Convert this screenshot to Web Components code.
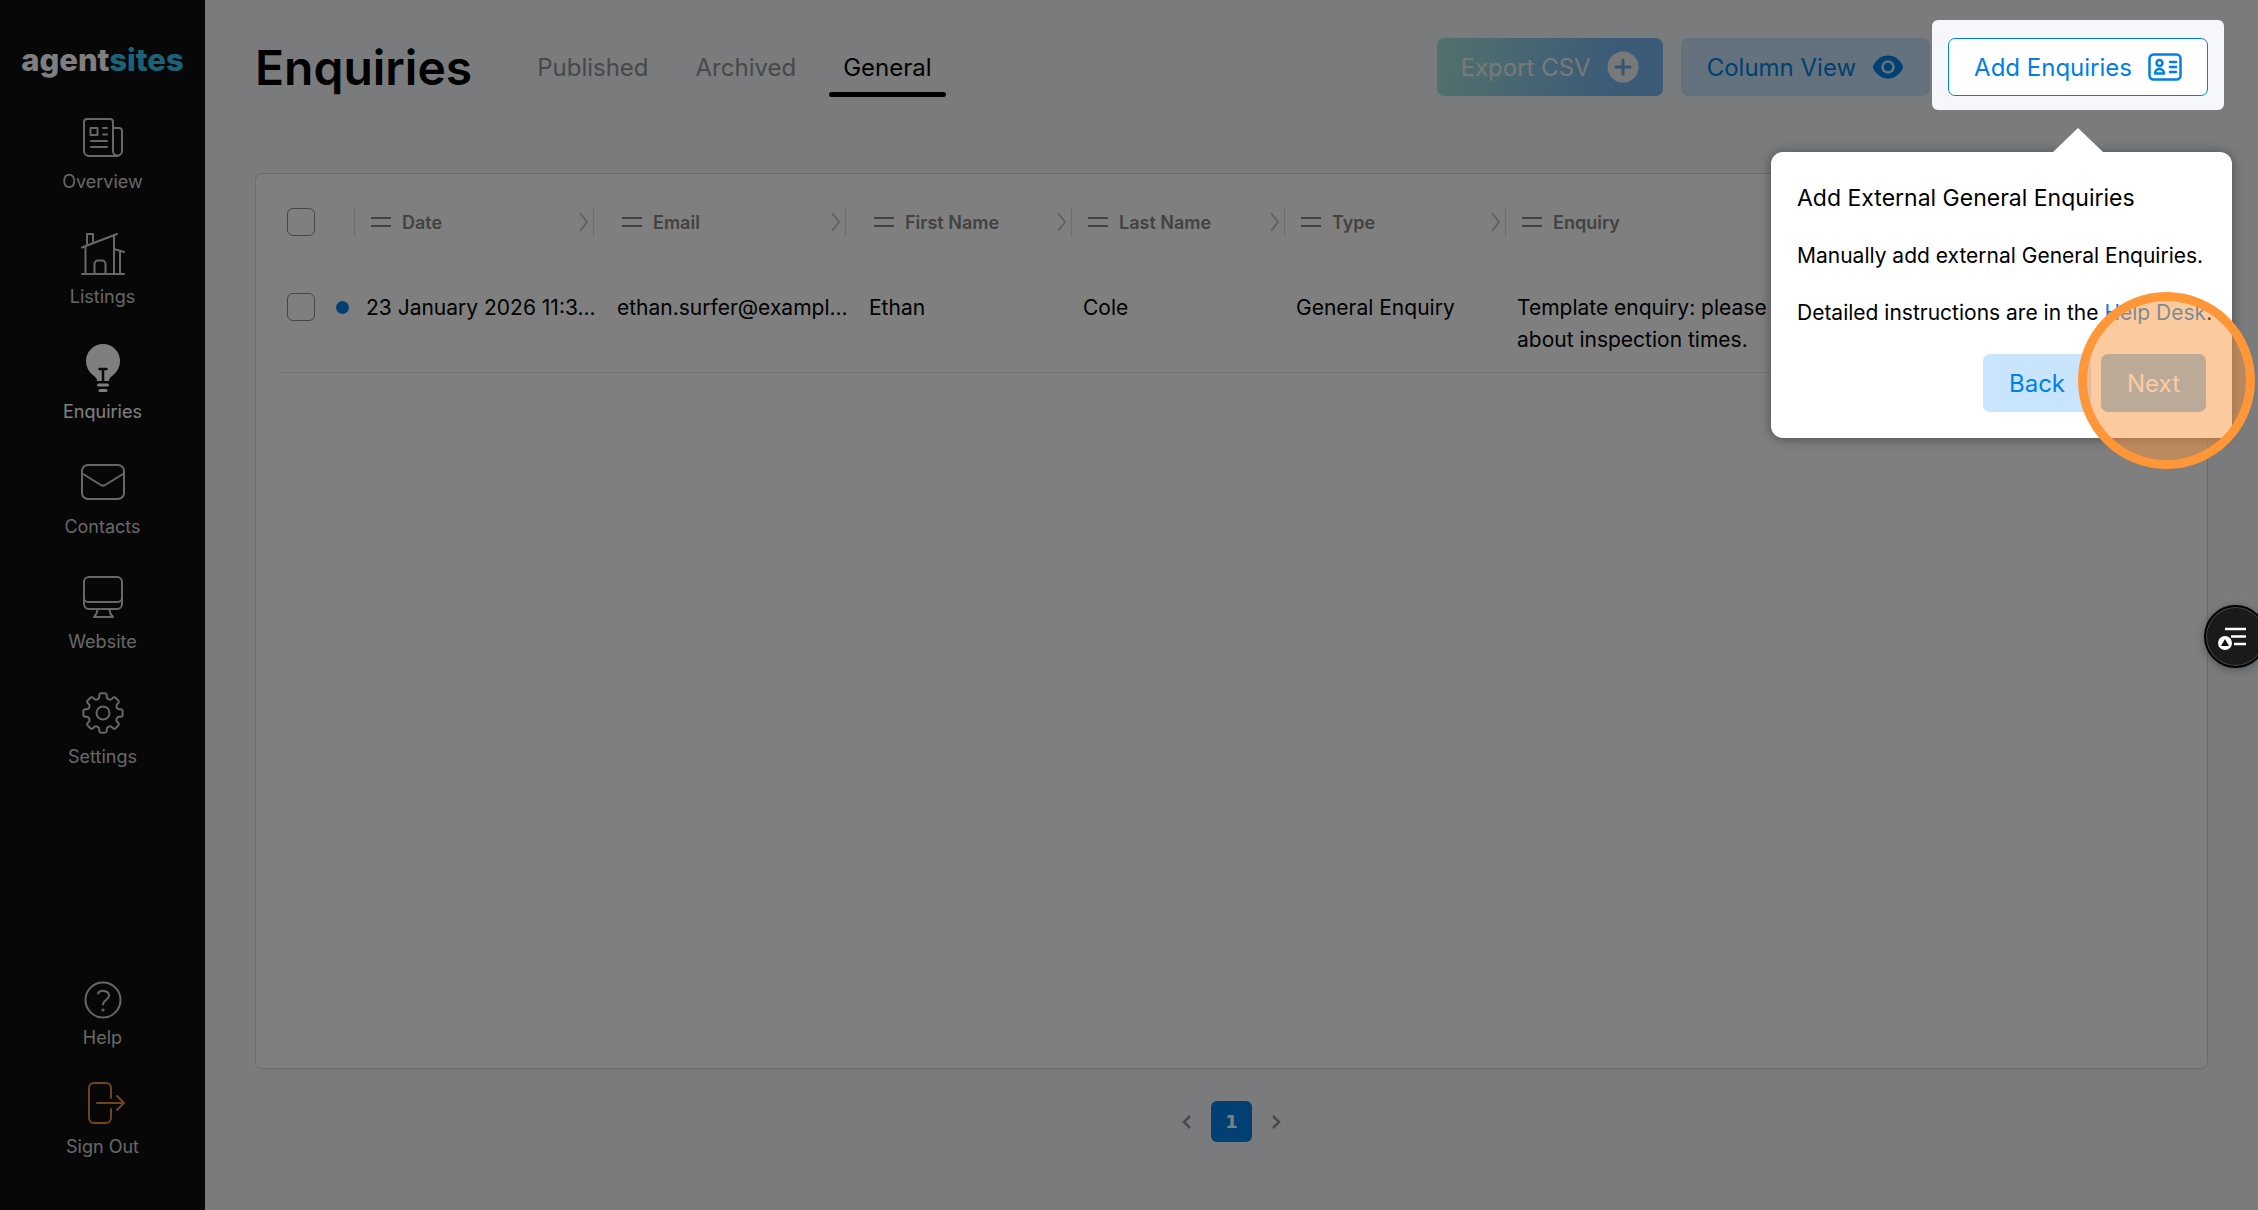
<!DOCTYPE html>
<html lang="en">
<head>
<meta charset="utf-8">
<title>Enquiries - agentsites</title>
<style>
  * {
    box-sizing: border-box;
  }
  body {
    display: flex;
    min-height: 100vh;
    margin: 0;
    overflow: hidden;
    background: #f5f7fa;
    color: #000;
    font-family: Inter, "Liberation Sans", sans-serif;
    font-size: 21px;
    --blue: #0080e6;
    --pale: #c9e5fd;
  }
  main {
    flex: 1;
    min-width: 0;
    display: flex;
    flex-direction: column;
    padding: 38px 50px 68px;
  }
</style>
</head>
<body>

<side-bar>
  <nav-item icon="overview">Overview</nav-item>
  <nav-item icon="listings">Listings</nav-item>
  <nav-item icon="bulb" active>Enquiries</nav-item>
  <nav-item icon="mail">Contacts</nav-item>
  <nav-item icon="screen">Website</nav-item>
  <nav-item icon="gear">Settings</nav-item>
  <nav-item slot="bottom" icon="help">Help</nav-item>
  <nav-item slot="bottom" icon="signout">Sign Out</nav-item>
</side-bar>

<main>
  <page-header heading="Enquiries">
    <tab-link slot="tabs">Published</tab-link>
    <tab-link slot="tabs">Archived</tab-link>
    <tab-link slot="tabs" active>General</tab-link>
    <action-button kind="gradient" icon="plus">Export CSV</action-button>
    <action-button kind="pale" icon="eye">Column View</action-button>
    <tour-step heading="Add External General Enquiries">
      <action-button slot="target" kind="outline" icon="card">Add Enquiries</action-button>
      Manually add external General Enquiries.
    </tour-step>
  </page-header>
  <enquiry-table></enquiry-table>
  <page-nav></page-nav>
</main>

<guide-toggle></guide-toggle>

<script>
  // outline of an eight tooth cog with softened corners
  function cog(c, outer, inner) {
    const pts = [];
    for (let i = 0; i < 8; i++) {
      [[-14, inner], [-11, outer], [11, outer], [14, inner]].forEach(([deg, r]) => {
        const a = (i * 45 + deg) * Math.PI / 180;
        pts.push([c + r * Math.sin(a), c - r * Math.cos(a)]);
      });
    }
    // point two units from p on the way to q
    const toward = (p, q) => {
      const k = 2 / Math.hypot(q[0] - p[0], q[1] - p[1]);
      return `${(p[0] + (q[0] - p[0]) * k).toFixed(2)} ${(p[1] + (q[1] - p[1]) * k).toFixed(2)}`;
    };
    const n = pts.length;
    return pts.map((p, i) =>
      `${i ? 'L' : 'M'}${toward(p, pts[(i + n - 1) % n])}Q${p[0].toFixed(2)} ${p[1].toFixed(2)} ${toward(p, pts[(i + 1) % n])}`
    ).join('') + 'Z';
  }

  const line = (w, h, body) => `<svg width="${w}" height="${h}" viewBox="0 0 ${w} ${h}" fill="none"
    stroke="currentColor" stroke-width="2" stroke-linecap="round" stroke-linejoin="round" aria-hidden="true">${body}</svg>`;

  const icons = {
    overview: line(48, 48, `
      <path d="M34 42H10a5 5 0 0 1-5-5V8a3 3 0 0 1 3-3h23a3 3 0 0 1 3 3v29a4.500 4.500 0 0 0 9 0V17a3 3 0 0 0-3-3h-6M34 42h5"/>
      <path d="M11.500 14h7v7h-7zM24 14h4M24 20.500h4M12 27h16M12 33h16"/>`),
    listings: line(48, 48, `
      <path d="M3 45h42M6.500 45V18M3 18.500 38 5M35 6v39M8 15V5h6v8M35 20l10 3M41 23v22"/>
      <path d="M15.500 45V35a3.500 3.500 0 0 1 3.500-3.500h4a3.500 3.500 0 0 1 3.500 3.500v10"/>`),
    bulb: `<svg width="48" height="50" viewBox="0 0 48 50" aria-hidden="true">
      <path fill="currentColor" d="M24 1a17 17 0 0 0-17 17c0 7 4 12 8 15 2 1.500 3 3 3 5h12c0-2 1-3.500 3-5 4-3 8-8 8-15A17 17 0 0 0 24 1z"/>
      <path stroke="#0f0f0f" stroke-width="2.500" stroke-linecap="round" fill="none" d="M20.500 26h7M24 26v12"/>
      <path stroke="currentColor" stroke-width="3" stroke-linecap="round" d="M19.500 42h9M21 47.500h6"/></svg>`,
    mail: line(48, 48, `<rect x="3" y="6" width="42" height="34" rx="6"/><path d="m4 15 17 10.500a5 5 0 0 0 6 0L44 15"/>`),
    screen: line(48, 48, `<rect x="5" y="3" width="38" height="32" rx="5"/>
      <path d="M5 24a4 4 0 0 0 4 4h30a4 4 0 0 0 4-4M18.500 35c0 4-1.500 6-3.500 8h19c-2-2-3.500-4-3.500-8"/>`),
    gear: line(48, 48, `<path d="${cog(24, 20, 15)}"/><circle cx="24" cy="24" r="6.500"/>`),
    help: line(40, 40, `<circle cx="20" cy="20" r="17.500"/>
      <path d="M15 13.500c2-4 11-3.500 11 2 0 4.500-6 4.500-6 9"/><circle cx="20" cy="30" r=".6"/>`),
    signout: line(48, 48, `<path d="M32 19V9a5 5 0 0 0-5-5H15a5 5 0 0 0-5 5v30a5 5 0 0 0 5 5h12a5 5 0 0 0 5-5V30M18 24h27M38 17l7 7-7 7"/>`),
    plus: `<svg width="32" height="32" viewBox="0 0 32 32" aria-hidden="true"><circle cx="16" cy="16" r="15.500" fill="currentColor"/>
      <path d="M16 9v14M9 16h14" stroke="#6fabe0" stroke-width="3" stroke-linecap="round"/></svg>`,
    eye: `<svg width="32" height="32" viewBox="0 0 32 32" aria-hidden="true">
      <path fill="currentColor" d="M16 4.500C9 4.500 3.500 9.500 1 15a2.500 2.500 0 0 0 0 2c2.500 5.500 8 10.500 15 10.500S28.500 22.500 31 17a2.500 2.500 0 0 0 0-2C28.500 9.500 23 4.500 16 4.500z"/>
      <circle cx="16" cy="16" r="5.500" fill="none" stroke="#c9e5fd" stroke-width="2.500"/></svg>`,
    card: `<svg width="34" height="28" viewBox="0 0 34 28" fill="none" stroke="currentColor" stroke-width="2.500" stroke-linecap="round" aria-hidden="true">
      <rect x="1.500" y="1.500" width="31" height="25" rx="4"/><circle cx="11.500" cy="10" r="3"/>
      <path stroke-linejoin="round" d="M7 20.500c0-6 9-6 9 0zM22 9h6M22 14h6M22 19h6"/></svg>`
  };

  class SideBar extends HTMLElement {
    constructor() {
      super();
      this.attachShadow({mode: 'open'});
    }

    connectedCallback() {
      this.shadowRoot.innerHTML = `
        <style>
          :host {
            flex: none;
            display: flex;
            flex-direction: column;
            width: 205px;
            box-sizing: border-box;
            padding: 40px 0 51px;
            background: #0f0f0f;
            color: #fff;
          }
          .logo {
            margin-bottom: 34px;
            color: inherit;
            font-size: 31px;
            font-weight: 800;
            line-height: 40px;
            text-align: center;
            text-decoration: none;
          }
          .logo span {
            color: #36c5f0;
          }
          nav {
            flex: 1;
            display: flex;
            flex-direction: column;
            gap: 35px;
          }
          .bottom {
            display: flex;
            flex-direction: column;
            gap: 29px;
          }
        </style>
        <a class="logo" href="#">agent<span>sites</span></a>
        <nav><slot></slot></nav>
        <div class="bottom"><slot name="bottom"></slot></div>
      `;
    }
  }
  customElements.define('side-bar', SideBar);

  class NavItem extends HTMLElement {
    constructor() {
      super();
      this.attachShadow({mode: 'open'});
    }

    connectedCallback() {
      const icon = this.getAttribute('icon');
      this.shadowRoot.innerHTML = `
        <style>
          :host {
            display: block;
          }
          a {
            display: flex;
            flex-direction: column;
            align-items: center;
            gap: 8px;
            color: #cfcfcf;
            font-size: 18px;
            line-height: 24px;
            text-decoration: none;
          }
          :host([active]) a {
            color: #fff;
          }
          .icon {
            display: flex;
            align-items: center;
            height: 48px;
          }
          :host([icon="help"]) .icon {
            height: 36px;
          }
          :host([icon="signout"]) .icon {
            color: #e08a3c;
          }
        </style>
        <a href="#${icon}"><span class="icon">${icons[icon]}</span><slot></slot></a>
      `;
    }
  }
  customElements.define('nav-item', NavItem);

  class PageHeader extends HTMLElement {
    constructor() {
      super();
      this.attachShadow({mode: 'open'});
    }

    connectedCallback() {
      this.shadowRoot.innerHTML = `
        <style>
          :host {
            display: flex;
            align-items: flex-start;
            gap: 51px;
            margin-bottom: 75px;
          }
          h1 {
            margin: 0;
            font-size: 48px;
            font-weight: 600;
            line-height: 60px;
          }
          nav {
            display: flex;
            gap: 19px;
          }
          .actions {
            display: flex;
            gap: 18px;
            margin-left: auto;
          }
        </style>
        <h1>${this.getAttribute('heading')}</h1>
        <nav><slot name="tabs"></slot></nav>
        <div class="actions"><slot></slot></div>
      `;
    }
  }
  customElements.define('page-header', PageHeader);

  class TabLink extends HTMLElement {
    constructor() {
      super();
      this.attachShadow({mode: 'open'});
    }

    connectedCallback() {
      this.shadowRoot.innerHTML = `
        <style>
          :host {
            display: block;
          }
          a {
            display: block;
            height: 60px;
            box-sizing: border-box;
            padding: 0 14px;
            color: #8f9194;
            font-size: 24px;
            line-height: 60px;
            text-decoration: none;
          }
          :host([active]) a {
            color: #000;
          }
          :host([active]) a::after {
            content: "";
            display: block;
            height: 5px;
            margin: -6px -14px 0;
            border-radius: 3px;
            background: #000;
          }
        </style>
        <a href="#"><slot></slot></a>
      `;
    }
  }
  customElements.define('tab-link', TabLink);

  class ActionButton extends HTMLElement {
    constructor() {
      super();
      this.attachShadow({mode: 'open'});
    }

    connectedCallback() {
      this.shadowRoot.innerHTML = `
        <style>
          :host {
            display: block;
          }
          button {
            display: flex;
            align-items: center;
            gap: 16px;
            height: 58px;
            box-sizing: border-box;
            padding: 0 25px;
            border: 1px solid transparent;
            border-radius: 7px;
            background: var(--pale);
            color: var(--blue);
            font-family: inherit;
            font-size: 24px;
            white-space: nowrap;
          }
          :host([kind="gradient"]) button {
            padding: 0 24px;
            border: 0;
            background: linear-gradient(100deg, #a6e2da, #79b7ef 75%);
            color: #f0f2f2;
          }
          :host([kind="outline"]) button {
            border-color: var(--blue);
            background: #fff;
          }
          svg {
            display: block;
          }
        </style>
        <button type="button"><slot></slot>${icons[this.getAttribute('icon')] || ''}</button>
      `;
    }
  }
  customElements.define('action-button', ActionButton);

  // spotlight round the slotted target, with the step's popover under it
  class TourStep extends HTMLElement {
    constructor() {
      super();
      this.attachShadow({mode: 'open'});
    }

    connectedCallback() {
      this.shadowRoot.innerHTML = `
        <style>
          :host {
            display: block;
            position: relative;
            z-index: 10;
          }
          .spotlight {
            position: absolute;
            inset: -18px -16px -14px;
            border-radius: 6px;
            box-shadow: 0 0 0 4000px rgba(0, 0, 0, .5);
            pointer-events: none;
          }
          .popover {
            position: absolute;
            top: 114px;
            right: -24px;
            width: 461px;
            box-sizing: border-box;
            padding: 26px;
            border-radius: 12px;
            background: #fff;
            box-shadow: 0 1px 12px rgba(0, 0, 0, .4);
            line-height: 32px;
          }
          .popover::before {
            content: "";
            position: absolute;
            top: -24px;
            right: 129px;
            border: 25px solid transparent;
            border-top: 0;
            border-bottom: 24px solid #fff;
          }
          h2 {
            margin: 4px 0 26px;
            font-size: 23px;
            font-weight: 400;
            line-height: 32px;
          }
          p {
            margin: 0 0 25px;
            white-space: nowrap;
          }
          a {
            color: var(--blue);
            text-decoration: none;
          }
          .buttons {
            display: flex;
            justify-content: flex-end;
            gap: 10px;
          }
          .next {
            --pale: #0080e6;
            --blue: #fff;
            opacity: .5;
          }
          .click {
            position: absolute;
            right: -23px;
            bottom: -31px;
            width: 177px;
            height: 177px;
            box-sizing: border-box;
            border: 9px solid #ff9638;
            border-radius: 50%;
            background: rgba(250, 150, 64, .5);
            pointer-events: none;
          }
        </style>
        <slot name="target"></slot>
        <div class="spotlight"></div>
        <div class="popover" role="dialog" aria-labelledby="title">
          <h2 id="title">${this.getAttribute('heading')}</h2>
          <p><slot></slot></p>
          <p>Detailed instructions are in the <a href="#">Help Desk</a>.</p>
          <div class="buttons">
            <action-button kind="pale">Back</action-button>
            <action-button kind="pale" class="next">Next</action-button>
          </div>
          <div class="click"></div>
        </div>
      `;
    }
  }
  customElements.define('tour-step', TourStep);

  class EnquiryTable extends HTMLElement {
    constructor() {
      super();
      this.attachShadow({mode: 'open'});
      this.columns = ['Date', 'Email', 'First Name', 'Last Name', 'Type', 'Enquiry'];
      this.rows = [
        ['23 January 2026 11:3...', 'ethan.surfer@exampl...', 'Ethan', 'Cole', 'General Enquiry',
          'Template enquiry: please<br>about inspection times.']
      ];
    }

    connectedCallback() {
      const head = this.columns.map((name, i) => `
        <th class="c${i}"><div class="head">
          <svg width="22" height="12" viewBox="0 0 22 12"><path d="M1 2h20M1 10h20" stroke="currentColor" stroke-width="2"/></svg>
          <span>${name}</span>
          <svg class="chevron" width="10" height="20" viewBox="0 0 10 20" fill="none"><path d="m1 1 7 9-7 9" stroke="#c4c4c4" stroke-width="2"/></svg>
        </div></th>`).join('');
      const body = this.rows.map(row => `
        <tr>
          <td><div class="pick"><input type="checkbox" aria-label="Select row"><i></i></div></td>
          ${row.map(cell => `<td><div class="cell">${cell}</div></td>`).join('')}
        </tr>`).join('');

      this.shadowRoot.innerHTML = `
        <style>
          :host {
            flex: 1;
            display: block;
            padding: 0 23px;
            border: 1px solid #d3d6da;
            border-radius: 7px;
            background: #fff;
          }
          table {
            width: 100%;
            table-layout: fixed;
            border-collapse: collapse;
          }
          th, td {
            padding: 0;
            text-align: left;
            vertical-align: top;
          }
          th {
            padding: 33px 0 39px;
          }
          td {
            padding: 16px 0;
            border-bottom: 1px solid #e6e6e6;
            line-height: 32px;
          }
          .head {
            display: flex;
            align-items: center;
            gap: 10px;
            height: 30px;
            box-sizing: border-box;
            padding: 0 4px 0 15px;
            border-right: 1px solid #dcdcdc;
            color: #858585;
            font-size: 18px;
            font-weight: 600;
            white-space: nowrap;
          }
          .head.first {
            padding: 0 0 0 8px;
          }
          .c0 .head, .c1 .head {
            margin-right: 12px;
          }
          .c5 .head {
            border: 0;
          }
          .chevron {
            margin-left: auto;
          }
          .pick {
            display: flex;
            align-items: center;
            gap: 21px;
            height: 30px;
            padding-left: 8px;
          }
          .pick i {
            width: 13px;
            height: 13px;
            border-radius: 50%;
            background: var(--blue);
          }
          input {
            appearance: none;
            width: 28px;
            height: 28px;
            margin: 0;
            border: 1px solid #8c8c8c;
            border-radius: 6px;
            background: #fff;
          }
          .cell {
            padding-left: 11px;
            white-space: nowrap;
          }
        </style>
        <table>
          <colgroup>
            <col style="width: 76px"><col style="width: 251px"><col style="width: 252px"><col style="width: 214px">
            <col style="width: 213px"><col style="width: 221px"><col>
          </colgroup>
          <thead><tr><th><div class="head first"><input type="checkbox" aria-label="Select all"></div></th>${head}</tr></thead>
          <tbody>${body}</tbody>
        </table>
      `;
    }
  }
  customElements.define('enquiry-table', EnquiryTable);

  class PageNav extends HTMLElement {
    constructor() {
      super();
      this.attachShadow({mode: 'open'});
    }

    connectedCallback() {
      this.shadowRoot.innerHTML = `
        <style>
          :host {
            display: block;
            margin-top: 32px;
          }
          nav {
            display: flex;
            justify-content: center;
            gap: 14px;
          }
          button {
            display: flex;
            align-items: center;
            justify-content: center;
            width: 20px;
            height: 41px;
            padding: 0;
            border: 0;
            border-radius: 6px;
            background: none;
            color: #909296;
            font: bold 18px "DejaVu Sans", sans-serif;
          }
          .current {
            width: 41px;
            background: var(--blue);
            color: #fff;
          }
        </style>
        <nav aria-label="Pages">
          <button type="button" aria-label="Previous"><svg width="10" height="14" viewBox="0 0 10 14" fill="none"><path d="M8 1 2 7l6 6" stroke="currentColor" stroke-width="2.500"/></svg></button>
          <button type="button" class="current">1</button>
          <button type="button" aria-label="Next"><svg width="10" height="14" viewBox="0 0 10 14" fill="none"><path d="m2 1 6 6-6 6" stroke="currentColor" stroke-width="2.500"/></svg></button>
        </nav>
      `;
    }
  }
  customElements.define('page-nav', PageNav);

  class GuideToggle extends HTMLElement {
    constructor() {
      super();
      this.attachShadow({mode: 'open'});
    }

    connectedCallback() {
      this.shadowRoot.innerHTML = `
        <style>
          :host {
            position: fixed;
            top: 50%;
            right: -9px;
            z-index: 20;
            display: block;
          }
          button {
            display: block;
            width: 63px;
            height: 63px;
            padding: 0;
            border: 2px solid #000;
            border-radius: 50%;
            background: #1a1a1a;
            box-shadow: inset 0 0 0 1px #4a4a4a, 0 2px 10px rgba(0, 0, 0, .3);
          }
          svg {
            display: block;
          }
        </style>
        <button type="button" aria-label="Open guide">
          <svg width="59" height="59" viewBox="0 0 59 59" fill="none">
            <path d="M19 22h21M25 29.500h15M28 37h12" stroke="#fff" stroke-width="2.500"/>
            <circle cx="19" cy="36" r="7" fill="#fff"/><path d="m19 32 4 7h-8z" fill="#111"/>
          </svg>
        </button>
      `;
    }
  }
  customElements.define('guide-toggle', GuideToggle);
</script>
</body>
</html>
